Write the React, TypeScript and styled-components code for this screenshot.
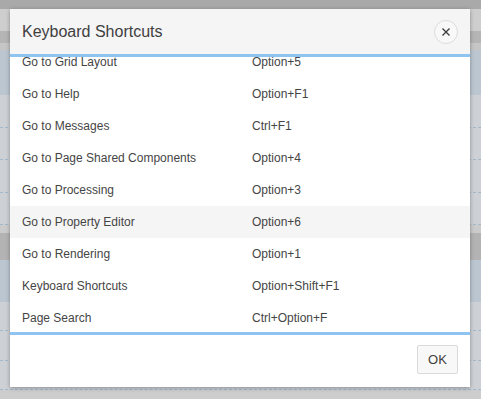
import React, { useLayoutEffect, useRef } from 'react';
import styled, { createGlobalStyle } from 'styled-components';

const Global = createGlobalStyle`
	html, body {
		margin: 0;
		padding: 0;
		width: 481px;
		height: 399px;
		overflow: hidden;
		font-family: 'Liberation Sans', Arial, sans-serif;
	}
`;

const shortcuts: [string, string][] = [
	['Go to Grid Layout', 'Option+5'],
	['Go to Help', 'Option+F1'],
	['Go to Messages', 'Ctrl+F1'],
	['Go to Page Shared Components', 'Option+4'],
	['Go to Processing', 'Option+3'],
	['Go to Property Editor', 'Option+6'],
	['Go to Rendering', 'Option+1'],
	['Keyboard Shortcuts', 'Option+Shift+F1'],
	['Page Search', 'Ctrl+Option+F'],
];

const bands: { h: number; bg: string; dashed?: number }[] = [
	{ h: 9, bg: '#a9a9a9' },
	{ h: 22, bg: '#cecece' },
	{ h: 12, bg: '#b5b5b5' },
	{ h: 7, bg: '#c6c6c6' },
	{ h: 45, bg: '#bbc6d1' },
	{ h: 130, bg: '#cdd1d5', dashed: 4 },
	{ h: 8, bg: '#cbcbcb' },
	{ h: 27, bg: '#b3b3b3' },
	{ h: 42, bg: '#bbc6d1' },
	{ h: 88, bg: '#cdd1d5', dashed: 3 },
	{ h: 9, bg: '#cdcdcd' },
];

const Page = styled.div`
	position: relative;
	width: 481px;
	height: 399px;
	overflow: hidden;
`;

const Backdrop = styled.div`
	display: flex;
	flex-direction: column;
	height: 100%;
`;

const Band = styled.div<{ $h: number; $bg: string }>`
	height: ${(p) => p.$h}px;
	flex: none;
	background: ${(p) => p.$bg};
	display: flex;
	flex-direction: column;
`;

const DashRow = styled.div`
	flex: 1;
	border-bottom: 1px dashed #a4b8cc;
`;

const Dialog = styled.div`
	position: absolute;
	left: 10px;
	top: 9px;
	width: 460px;
	height: 378px;
	background: #fff;
	box-shadow: 0 1px 4px rgba(0, 0, 0, 0.35);
	display: flex;
	flex-direction: column;
`;

const Header = styled.div`
	height: 45px;
	flex: none;
	background: #f5f5f5;
	display: flex;
	align-items: center;
	justify-content: space-between;
	padding: 0 12px;
	border-bottom: 3px solid #8fc3f0;
`;

const Title = styled.h1`
	margin: 0;
	font-size: 16px;
	font-weight: normal;
	color: #404040;
`;

const CloseButton = styled.button`
	width: 24px;
	height: 24px;
	border-radius: 50%;
	border: 1px solid #dcdcdc;
	background: #f8f8f8;
	padding: 0;
	display: flex;
	align-items: center;
	justify-content: center;
`;

const Body = styled.div`
	flex: 1;
	overflow: hidden;
	border-bottom: 3px solid #8fc3f0;
`;

const Row = styled.div<{ $hover?: boolean }>`
	height: 32px;
	display: grid;
	grid-template-columns: 230px 1fr;
	align-items: center;
	padding-left: 12px;
	font-size: 12px;
	color: #454545;
	background: ${(p) => (p.$hover ? '#f5f5f5' : '#fff')};
`;

const Footer = styled.div`
	height: 52px;
	flex: none;
	display: flex;
	justify-content: flex-end;
	align-items: flex-start;
	padding: 10px 12px 0;
	box-sizing: border-box;
`;

const OkButton = styled.button`
	width: 41px;
	height: 29px;
	border: 1px solid #dadada;
	border-radius: 2px;
	background: #f8f8f8;
	font-family: inherit;
	font-size: 13px;
	color: #404040;
	padding: 0;
`;

export default function App() {
	const bodyRef = useRef<HTMLDivElement>(null);
	useLayoutEffect(() => {
		if (bodyRef.current) bodyRef.current.scrollTop = 11;
	}, []);

	return (
		<Page>
			<Global />
			<Backdrop>
				{bands.map((b, i) => (
					<Band key={i} $h={b.h} $bg={b.bg}>
						{b.dashed &&
							Array.from({ length: b.dashed }).map((_, j) => <DashRow key={j} />)}
					</Band>
				))}
			</Backdrop>
			<Dialog>
				<Header>
					<Title>Keyboard Shortcuts</Title>
					<CloseButton aria-label='Close'>
						<svg width='10' height='10' viewBox='0 0 10 10'>
							<path d='M1.5 1.5 L8.5 8.5 M8.5 1.5 L1.5 8.5' stroke='#3a3a3a' strokeWidth='1.3' />
						</svg>
					</CloseButton>
				</Header>
				<Body ref={bodyRef}>
					{shortcuts.map(([name, keys]) => (
						<Row key={name} $hover={name === 'Go to Property Editor'}>
							<span>{name}</span>
							<span>{keys}</span>
						</Row>
					))}
				</Body>
				<Footer>
					<OkButton>OK</OkButton>
				</Footer>
			</Dialog>
		</Page>
	);
}
